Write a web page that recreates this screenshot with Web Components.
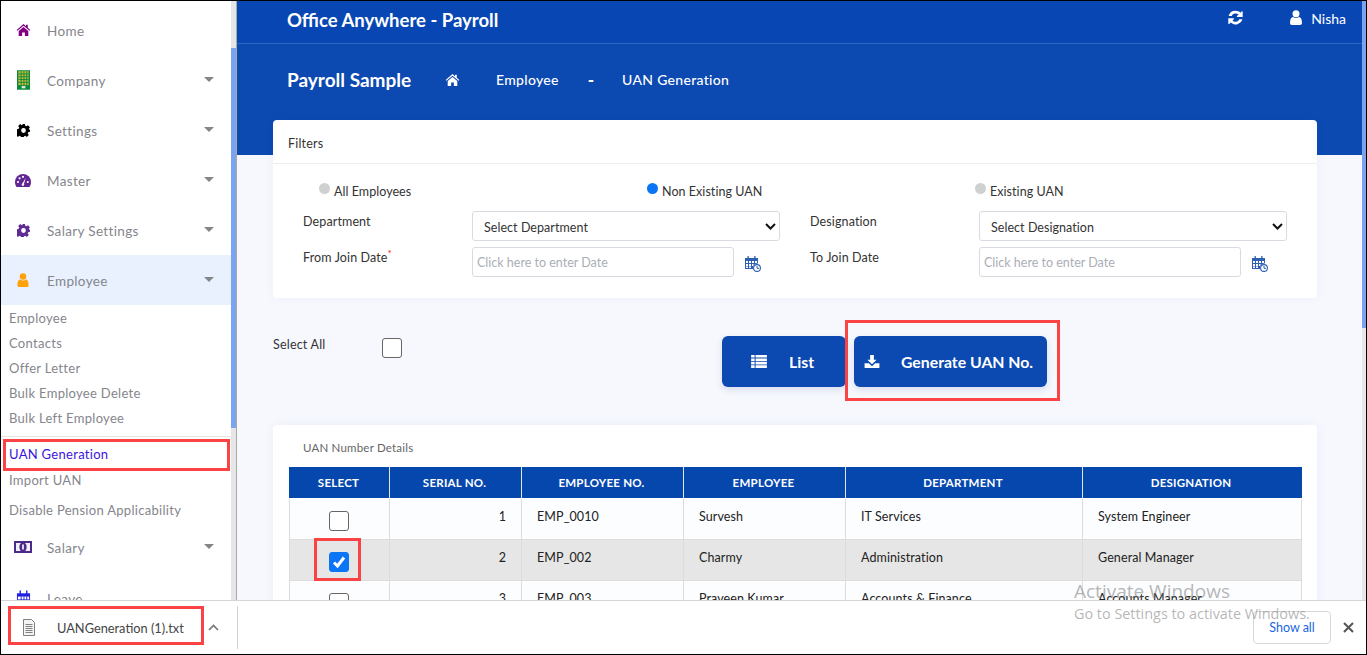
<!DOCTYPE html>
<html lang="en"><head><meta charset="utf-8"><title>UAN Generation</title>
<style>
html,body{margin:0;padding:0;height:655px;overflow:hidden;background:#000}
body{font-family:Lato,"Open Sans",sans-serif}
</style></head><body>
<x-app></x-app>
<script>
const ICONS={
home:'<svg viewBox="0 0 16 14"><path fill="currentColor" d="M8 0 L11 2.6V1h2v3.3L16 7l-.9 1L8 2 .9 8 0 7zM2.4 8.3 8 3.6l5.6 4.7V14H9.6V10H6.4v4H2.400z"/></svg>',
building:'<svg viewBox="0 0 14 21"><rect width="14" height="21" fill="#0b8a3c"/><rect x="1.5" y="1" width="11" height="15" fill="#c9b83a"/><path stroke="#0b8a3c" stroke-width="1" d="M1.5 4h11M1.5 7h11M1.5 10h11M1.5 13h11M4.5 1v15M7.5 1v15M10.5 1v15"/><rect x="5" y="17" width="4" height="2.5" fill="#dfe9d8"/></svg>',
gear:'<svg viewBox="0 0 24 24"><path fill="currentColor" fill-rule="evenodd" d="M9.500 0h5l.7 3.400 2.100.9 3-1.900 3.500 3.500-1.900 3 .9 2.100L24 9.500v5l-3.300.7-.9 2.100 1.900 3-3.500 3.500-3-1.900-2.100.9-.7 3.300h-5l-.7-3.300-2.100-.9-3 1.900-3.500-3.500 1.900-3-.9-2.100L0 14.500v-5l3.300-.7.900-2.100-1.900-3 3.500-3.500 3 1.900 2.100-.9zM12 7.600a4.400 4.400 0 1 0 0 8.800 4.400 4.400 0 0 0 0-8.800z"/></svg>',
dash:'<svg viewBox="0 0 16 13"><path fill="#5f2694" d="M8 0a8 8 0 0 1 8 8c0 2-.6 3.600-1.600 5H1.600C.6 11.600 0 10 0 8a8 8 0 0 1 8-8z"/><g fill="#fff"><circle cx="3" cy="8" r="1.100"/><circle cx="4.600" cy="4.300" r="1.100"/><circle cx="8" cy="2.800" r="1.100"/><circle cx="12.800" cy="8" r="1.100"/><path d="M10.800 3.800 9 9.800a1.300 1.300 0 1 1-1.500-.5z"/></g></svg>',
bill:'<svg viewBox="0 0 18 12"><rect width="18" height="12" fill="#4b2a8c"/><rect x="2" y="2" width="14" height="8" fill="#f2eef8"/><ellipse cx="9" cy="6" rx="3.600" ry="4.500" fill="#4b2a8c"/><rect x="8.200" y="3.500" width="1.600" height="5" fill="#fff"/></svg>',
cal2:'<svg viewBox="0 0 16 16"><path fill="#1f1fe0" d="M1 3h14v13H1z"/><path fill="#fff" d="M2 6.500h12V15H2z"/><path stroke="#1f1fe0" d="M5.500 6.500V15M8.500 6.500V15M11.500 6.500V15M2 10h12"/><path stroke="#1f1fe0" stroke-width="1.500" d="M4.500 0v4M11.500 0v4"/></svg>',
user:'<svg viewBox="0 0 12 15"><circle cx="6" cy="3.700" r="3.500" fill="currentColor"/><path fill="currentColor" d="M0 13c0-4 1.400-6 3-6 .9.700 1.900 1 3 1s2.100-.3 3-1c1.600 0 3 2 3 6 0 1.300-.8 2-2 2H2c-1.200 0-2-.7-2-2z"/></svg>',
sync:'<svg viewBox="0 0 15 15"><path fill="currentColor" d="M7.700 .8c1.900 0 3.500.7 4.700 1.900L13.800 1.300c.3-.3.900-.1.900.4V7H9.400c-.5 0-.7-.6-.4-.9l1.500-1.500a4.200 4.200 0 0 0-6.800 1.400H.6A7.100 7.100 0 0 1 7.700 .8zM14.400 9.200A7.100 7.100 0 0 1 2.700 12.500L1.200 14c-.3.300-.9.100-.9-.4V8.200h5.300c.5 0 .7.600.4.900l-1.500 1.500a4.200 4.200 0 0 0 6.800-1.400z"/></svg>',
list:'<svg viewBox="0 0 17 14"><path fill="currentColor" d="M0 0h3.800v2.800H0zM4.800 0H17v2.800H4.800zM0 3.700h3.800v2.800H0zM4.800 3.700H17v2.800H4.800zM0 7.400h3.800v2.800H0zM4.800 7.400H17v2.800H4.800zM0 11.100h3.800V14H0zM4.800 11.100H17V14H4.800z"/></svg>',
download:'<svg viewBox="0 0 16 14"><path fill="currentColor" d="M6 0h4v5h3L8 10 3 5h3zM0 9h4.600L8 12l3.400-3H16v5H0z"/></svg>',
calclock:'<svg viewBox="0 0 16 16"><path fill="#2f5fb0" d="M0 2h13v5.500A4.800 4.800 0 0 0 8 13H0z"/><path fill="#2f5fb0" d="M2.500 0h1.300v3H2.500zM9.200 0h1.300v3H9.200z"/><path fill="#fff" d="M1 5h2v2H1zM4 5h2v2H4zM7 5h2v2H7zM10 5h2v2h-2zM1 8h2v2H1zM4 8h2v2H4zM7 8h1.500v2H7zM1 10.600h2v1.500H1zM4 10.600h2v1.500H4z"/><circle cx="12" cy="12" r="3.400" fill="#fff" stroke="#2f5fb0" stroke-width="1.100"/><path fill="none" stroke="#2f5fb0" d="M12 10v2.300h2"/></svg>',
file:'<svg viewBox="0 0 12 17"><path fill="#f4f4f4" stroke="#808080" d="M.5.500h8l3 3v13H.500z"/><path stroke="#808080" d="M2.500 5.500h7M2.500 7.500h7M2.500 9.500h7M2.500 11.500h7M2.500 13.500h7"/></svg>'
};
function def(name,css,html){
  customElements.define(name,class extends HTMLElement{
    connectedCallback(){
      if(this.shadowRoot)return;
      const r=this.attachShadow({mode:'open'});
      const a=n=>this.getAttribute(n)||'';
      r.innerHTML='<style>'+css+'</style>'+(typeof html==='function'?html(a,this):html);
    }
  });
}
def('x-icon',':host{display:inline-flex}svg{width:100%;height:100%;display:block}',a=>ICONS[a('name')]||'');

def('x-nav-item',`:host{display:flex;align-items:center;height:50px;position:relative;color:#85858c;font-size:13.5px;letter-spacing:.35px;flex:none}
:host([active]){background:#e8f1fd}
.ic{width:44px;display:flex;justify-content:center;flex:none}
.ic x-icon{display:flex}
.lb{flex:1;padding:2px 0 0 2px}
.caret{width:0;height:0;border:5px solid transparent;border-top:5px solid #85858c;border-bottom:0;margin-right:17px;margin-top:-1px}`,
(a)=>`<div class="ic"><x-icon name="${a('icon')}" style="width:${a('w')}px;height:${a('h')}px;color:${a('color')}"></x-icon></div><div class="lb"><slot></slot></div>${a('caret')!==''?'<div class="caret"></div>':''}`);

def('x-sub-item',`:host{display:flex;align-items:center;height:25px;padding-left:8px;color:#85858c;font-size:13px;letter-spacing:.3px;flex:none}
:host([current]){color:#3a14e0}`,'<slot></slot>');

def('x-sidebar',`:host{display:flex;width:236px;flex:none;height:599px;overflow:hidden;background:#fff}
.nav{flex:1;display:flex;flex-direction:column;padding-top:4px;overflow:hidden;min-width:0}
.sb{width:5px;background:#e6e6e6;flex:none;border-right:1px solid #a9a9a9}
.th{margin-top:47px;height:380px;background:#7ba4ee}
.l{border-bottom:1px solid #e4e4e4;height:6px;margin-bottom:4px;flex:none}`,
`<div class="nav">
<x-nav-item icon="home" w="15" h="12" color="#800080">Home</x-nav-item>
<x-nav-item icon="building" w="13" h="20" caret="1">Company</x-nav-item>
<x-nav-item icon="gear" w="13" h="13" color="#000" caret="1">Settings</x-nav-item>
<x-nav-item icon="dash" w="16" h="13" caret="1">Master</x-nav-item>
<x-nav-item icon="gear" w="13" h="13" color="#5f2b94" caret="1">Salary Settings</x-nav-item>
<x-nav-item icon="user" w="12" h="14" color="#ffa20a" caret="1" active>Employee</x-nav-item>
<x-sub-item>Employee</x-sub-item><x-sub-item>Contacts</x-sub-item><x-sub-item>Offer Letter</x-sub-item><x-sub-item>Bulk Employee Delete</x-sub-item><x-sub-item>Bulk Left Employee</x-sub-item>
<div class="l"></div>
<x-sub-item current>UAN Generation</x-sub-item><div style="height:1px;flex:none"></div><x-sub-item>Import UAN</x-sub-item>
<div style="height:5px;flex:none"></div>
<x-sub-item>Disable Pension Applicability</x-sub-item>
<x-nav-item icon="bill" w="18" h="12" caret="1">Salary</x-nav-item>
<div style="height:1px;flex:none"></div>
<x-nav-item icon="cal2" w="15" h="16">Leave</x-nav-item>
</div><div class="sb"><div class="th"></div></div>`);

def('x-topbar',`:host{display:flex;align-items:center;height:42px;border-bottom:1px solid #2e66c4;padding:0 16px 0 50px;color:#fff}
.t{flex:1;font-size:18.5px;font-weight:700;padding-bottom:4px}
x-icon{margin:0 47px 10px 0;width:15px;height:15px}
.u{display:flex;align-items:center;gap:9px;font-size:14px;padding-bottom:8px}
.u x-icon{margin:0 0 2px;width:12px;height:15px}`,
`<div class="t">Office Anywhere - Payroll</div><x-icon name="sync"></x-icon><div class="u"><x-icon name="user"></x-icon>Nisha</div>`);

def('x-crumbs',`:host{display:flex;align-items:center;height:76px;padding:0 0 5px 50px;box-sizing:border-box;color:#fff;font-size:14px;letter-spacing:.3px;font-weight:500}
.t{font-size:19px;font-weight:700;width:158px;letter-spacing:0}
x-icon{width:15px;height:12px;margin-right:36px}
.d{margin:0 28px 0 29px;font-weight:900;font-size:17px;letter-spacing:0}`,
`<div class="t">Payroll Sample</div><x-icon name="home"></x-icon><span>Employee</span><span class="d">-</span><span>UAN Generation</span>`);

def('x-radio',`:host{display:flex;align-items:flex-start;gap:4px;color:#333;font-size:12.5px;letter-spacing:.05px}
i{width:11px;height:11px;border-radius:50%;background:#cfd1d0;margin-top:-1px;flex:none}
:host([on]) i{background:#0a75f5}`,'<i></i><span><slot></slot></span>');

def('x-select',`:host{display:flex;align-items:center;justify-content:space-between;height:30px;box-sizing:border-box;border:1px solid #d8dbe2;border-radius:3px;background:#fff;padding:2px 3px 0 11px;color:#333;font-size:12.5px;letter-spacing:.05px}
svg{width:11px;height:7px;margin-top:-2px}`,
`<span><slot></slot></span><svg viewBox="0 0 11 7"><path fill="none" stroke="#111" stroke-width="2" d="M1 1l4.500 4.500L10 1"/></svg>`);

def('x-date',`:host{display:flex;align-items:center;gap:11px}
div{width:262px;height:30px;box-sizing:border-box;border:1px solid #d8dbe2;border-radius:3px;background:#fff;padding:1px 4px 0;display:flex;align-items:center;color:#aaaeb6;font-size:12.5px}
x-icon{width:16px;height:16px;margin-top:3px}`,
`<div>Click here to enter Date</div><x-icon name="calclock"></x-icon>`);

def('x-filters',`:host{display:block;background:#fff;border-radius:4px;height:178px;box-sizing:border-box;box-shadow:0 0 12px rgba(30,50,120,.04)}
.h{height:44px;border-bottom:1px solid #eceef1;display:flex;align-items:center;padding:4px 0 0 15px;color:#333;font-size:12.5px;letter-spacing:.2px;box-sizing:border-box}
.r{display:grid;grid-template-columns:repeat(3,328px);padding:20px 0 0 46px;height:47px;box-sizing:border-box}
.g{display:grid;grid-template-columns:169px 308px 30px 169px 308px;row-gap:6px;padding-left:30px}
.l{font-size:12.5px;color:#333;letter-spacing:.12px;padding-top:3px}
sup{color:#f02020;font-size:10px;line-height:0}`,
`<div class="h">Filters</div>
<div class="r"><x-radio>All Employees</x-radio><x-radio on>Non Existing UAN</x-radio><x-radio>Existing UAN</x-radio></div>
<div class="g"><div class="l">Department</div><x-select>Select Department</x-select><i></i><div class="l">Designation</div><x-select>Select Designation</x-select>
<div class="l">From Join Date<sup>*</sup></div><x-date></x-date><i></i><div class="l">To Join Date</div><x-date></x-date></div>`);

def('x-check',`:host{display:inline-block;width:20px;height:20px;box-sizing:border-box;border:1px solid #666;border-radius:3px;background:#fff}
:host([on]){background:#0a75f5;border-color:#0a75f5}
svg{display:block;width:100%;height:100%}`,
a=>a('on')?'<svg viewBox="0 0 18 18"><path fill="none" stroke="#fff" stroke-width="3" d="M4 9.500l3.500 3.500L14 4.500"/></svg>':'');

def('x-btn',`:host{display:flex;align-items:center;height:51px;box-sizing:border-box;background:#0c49b1;border-radius:6px;color:#fff;font-size:15.8px;font-weight:700;box-shadow:0 3px 7px rgba(20,50,130,.13)}
x-icon{width:16px;height:13px;color:#fff}`,
a=>`<x-icon name="${a('icon')}" style="margin:0 ${a('gap')}px 0 ${a('pad')}px"></x-icon><slot></slot>`);

def('x-actions',`:host{display:flex;height:51px;margin:38px 0}
.s{display:flex;width:449px;flex:none;color:#333;font-size:12.5px;letter-spacing:.2px}
.s span{width:109px;margin-top:1px}
.s x-check{margin-top:2px}
x-btn[icon=list]{width:124px;margin-right:8px}
x-btn[icon=download]{width:193px}`,
`<div class="s"><span>Select All</span><x-check></x-check></div><x-btn icon="list" pad="29" gap="22">List</x-btn><x-btn icon="download" pad="10" gap="21">Generate UAN No.</x-btn>`);

def('x-uan-table',`:host{display:block;background:#fff;border-radius:4px 4px 0 0;padding:0 15px 0 16px;height:300px;box-shadow:0 0 12px rgba(30,50,120,.05)}
.c{height:42px;display:flex;align-items:center;padding-left:14px;color:#666;font-size:11.5px;letter-spacing:.2px;padding-top:2px;box-sizing:border-box}
table{border-collapse:collapse;table-layout:fixed;width:1012px;font-size:12.5px;color:#222;letter-spacing:.1px}
th{background:#0647ae;color:#fff;font-size:11.5px;font-weight:700;letter-spacing:.25px;padding:0 2px 0 0;border:1px solid #e2e4ea;border-top:0;border-bottom:1px solid #fff;height:31px;box-sizing:border-box}
th:first-child{border-left-color:#0647ae}th:last-child{border-right-color:#0647ae}
td{height:41px;box-sizing:border-box;border:1px solid #dcdcdc;padding:0 15px 5px 15px;vertical-align:middle;background:#fcfdff}
tr.a td{background:#e6e6e6}
td.n{text-align:right}
td.k{text-align:center;padding:12px 2px 0 0;vertical-align:top}
td.k x-check{display:block;margin:0 auto}`,
`<div class="c">UAN Number Details</div><table><colgroup><col style="width:100px"><col style="width:132px"><col style="width:162px"><col style="width:162px"><col style="width:237px"><col style="width:219px"></colgroup>
<tr><th>SELECT</th><th>SERIAL NO.</th><th>EMPLOYEE NO.</th><th>EMPLOYEE</th><th>DEPARTMENT</th><th>DESIGNATION</th></tr>
<tr><td class="k"><x-check></x-check></td><td class="n">1</td><td>EMP_0010</td><td>Survesh</td><td>IT Services</td><td>System Engineer</td></tr>
<tr class="a"><td class="k"><x-check on="1"></x-check></td><td class="n">2</td><td>EMP_002</td><td>Charmy</td><td>Administration</td><td>General Manager</td></tr>
<tr><td class="k"><x-check></x-check></td><td class="n">3</td><td>EMP_003</td><td>Praveen Kumar</td><td>Accounts &amp; Finance</td><td>Accounts Manager</td></tr></table>`);

def('x-main',`:host{display:flex;flex:1;min-width:0;height:599px;overflow:hidden}
.m{flex:1;min-width:0;background:linear-gradient(#0c49b1 154px,#f6f8fe 154px)}
.top{background:#0847b3}
.body{padding:0 45px 0 36px}
.sb{width:4px;background:#e8e8e8;flex:none}.th{height:327px;background:#7ba4ee}`,
`<div class="m"><div class="top"><x-topbar></x-topbar></div><x-crumbs></x-crumbs><div class="body"><x-filters></x-filters><x-actions></x-actions><x-uan-table></x-uan-table></div></div><div class="sb"><div class="th"></div></div>`);

def('x-download-bar',`:host{display:flex;align-items:center;height:54px;box-sizing:border-box;border-top:1px solid #d5d5d5;background:#fff;color:#444;font-size:12.8px;flex:none;padding-left:22px}
.f{width:12px;height:17px;margin-right:22px;margin-top:-1px}
.n{width:151px;padding-top:1px}
.v{width:11px;height:7px}
.d{width:1px;height:43px;background:#d0d0d0;margin:0 0 0 18px}
.sp{flex:1}
.b{width:78px;height:33px;box-sizing:border-box;border:1px solid #d8d8d8;border-radius:4px;display:flex;align-items:center;justify-content:center;color:#1a66e0;font-size:12.5px;margin-right:12px}
.x{width:11px;height:11px;margin-right:12px}`,
`<x-icon class="f" name="file"></x-icon><div class="n">UANGeneration (1).txt</div><svg class="v" viewBox="0 0 11 7"><path fill="none" stroke="#777" stroke-width="1.7" d="M1 6l4.500-4.500L10 6"/></svg><div class="d"></div><div class="sp"></div><div class="b">Show all</div><svg class="x" viewBox="0 0 11 11"><path stroke="#555" stroke-width="2" d="M1 1l9 9M10 1l-9 9"/></svg>`);

def('x-mark',`:host{position:absolute;box-sizing:border-box;border:3px solid #fb4245;pointer-events:none}`,'');

def('x-app',`:host{display:flex;flex-direction:column;position:relative;width:1367px;height:655px;box-sizing:border-box;border:1px solid #000;background:#fff;overflow:hidden}
.top{display:flex;height:599px;flex:none;overflow:hidden}
.wm{position:absolute;left:1073px;top:581px;color:rgba(120,120,120,.55);font-family:"Open Sans",sans-serif;line-height:1}
.wm b{display:block;font-weight:400;font-size:19px}
.wm span{display:block;font-size:14.4px;margin-top:6px}`,
`<div class="top"><x-sidebar></x-sidebar><x-main></x-main></div><x-download-bar></x-download-bar>
<div class="wm"><b>Activate Windows</b><span>Go to Settings to activate Windows.</span></div>
<x-mark style="left:2px;top:438px;width:227px;height:32px"></x-mark>
<x-mark style="left:844px;top:319px;width:215px;height:81px"></x-mark>
<x-mark style="left:313px;top:537px;width:47px;height:43px"></x-mark>
<x-mark style="left:7px;top:605px;width:196px;height:39px"></x-mark>`);
</script>
</body></html>
